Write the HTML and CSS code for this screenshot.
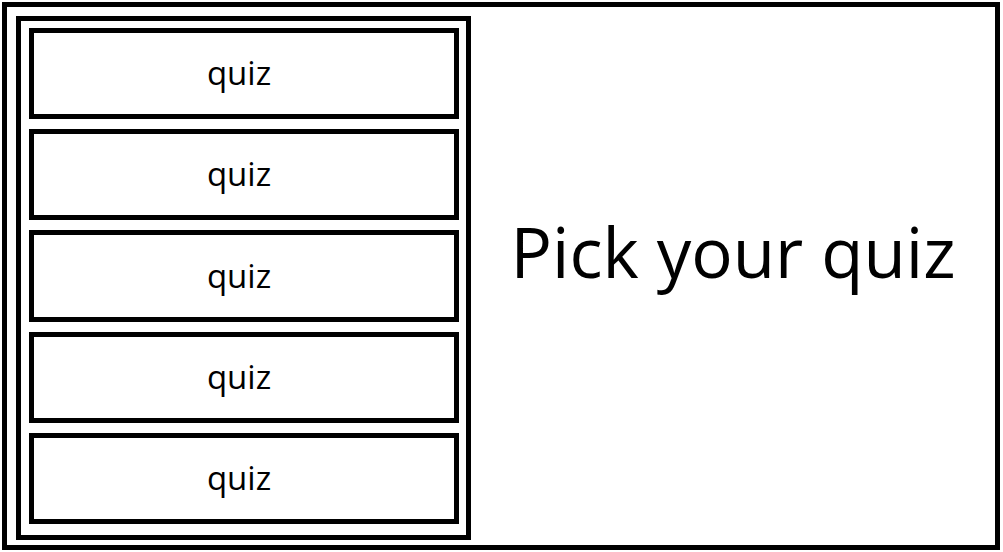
FILE: index.html
```html
<!DOCTYPE html>
<html lang="en">
<head>
<meta charset="utf-8">
<title>Pick your quiz</title>
<link rel="stylesheet" href="styles.css">
</head>
<body>
<div class="frame">
  <nav class="panel">
    <div class="quiz">quiz</div>
    <div class="quiz">quiz</div>
    <div class="quiz">quiz</div>
    <div class="quiz">quiz</div>
    <div class="quiz">quiz</div>
  </nav>
  <main class="stage">
    <h1 class="title">Pick your quiz</h1>
  </main>
</div>
</body>
</html>
```

FILE: styles.css
```css
html, body {
  margin: 0;
  padding: 0;
  background: #ffffff;
}

body {
  font-family: "Open Sans", "Noto Sans", sans-serif;
  color: #000000;
}

.frame {
  box-sizing: border-box;
  margin: 2px 0 0 2px;
  width: 998px;
  height: 548px;
  border: 5px solid #000000;
  padding: 9px 0 5px 9px;
  display: flex;
  align-items: flex-start;
}

.panel {
  box-sizing: border-box;
  width: 455px;
  height: 524px;
  flex: none;
  border: 5px solid #000000;
  padding: 7px 7px 11px 8px;
  display: flex;
  flex-direction: column;
  gap: 10px;
}

.quiz {
  box-sizing: border-box;
  flex: 1;
  border: 5px solid #000000;
  display: flex;
  align-items: center;
  justify-content: center;
  padding-right: 10px;
  font-size: 33px;
  line-height: 1.36;
}

.stage {
  flex: 1;
  align-self: stretch;
  display: flex;
  align-items: center;
  justify-content: center;
  padding-bottom: 52px;
}

.title {
  margin: 0;
  font-weight: normal;
  font-size: 69px;
  line-height: 1.36;
  white-space: nowrap;
}
```
